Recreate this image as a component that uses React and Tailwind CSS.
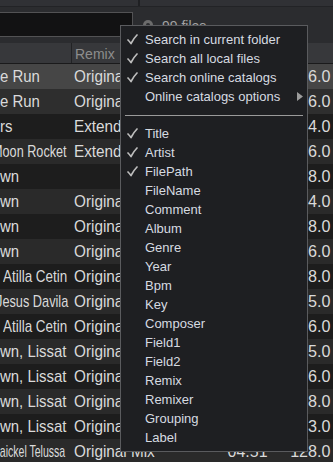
import React from "react";

const rows = [
  { bg: "bg-[#464646]", t: "e Run", c: "scale-x-[0.88] ml-0", r: "Original Mix", time: "05:12", bpm: "126.0" },
  { bg: "bg-[#2e2e2e]", t: "e Run", c: "scale-x-[0.88] ml-0", r: "Original Mix", time: "05:12", bpm: "126.0" },
  { bg: "bg-[#1d1d1d]", t: "rs", c: "scale-x-[0.88] ml-0", r: "Extended Mix", time: "06:03", bpm: "124.0" },
  { bg: "bg-[#2a2a2a]", t: "Moon Rocket", c: "scale-x-[0.745] ml-[-8px]", r: "Extended Mix", time: "06:41", bpm: "126.0" },
  { bg: "bg-[#1d1d1d]", t: "wn", c: "scale-x-[0.88] ml-0", r: "", time: "03:58", bpm: "128.0" },
  { bg: "bg-[#2a2a2a]", t: "wn", c: "scale-x-[0.88] ml-0", r: "Original Mix", time: "05:44", bpm: "124.0" },
  { bg: "bg-[#1d1d1d]", t: "wn", c: "scale-x-[0.88] ml-0", r: "Original Mix", time: "05:20", bpm: "128.0" },
  { bg: "bg-[#2a2a2a]", t: "wn", c: "scale-x-[0.88] ml-0", r: "Original Mix", time: "06:10", bpm: "126.0" },
  { bg: "bg-[#1d1d1d]", t: "Atilla Cetin", c: "scale-x-[0.79] ml-[3px]", r: "Original Mix", time: "05:36", bpm: "128.0" },
  { bg: "bg-[#2a2a2a]", t: "Jesus Davila", c: "scale-x-[0.75] ml-[-4px]", r: "Original Mix", time: "06:22", bpm: "125.0" },
  { bg: "bg-[#1d1d1d]", t: "Atilla Cetin", c: "scale-x-[0.79] ml-[3px]", r: "Original Mix", time: "05:48", bpm: "126.0" },
  { bg: "bg-[#2a2a2a]", t: "wn, Lissat", c: "scale-x-[0.88] ml-0", r: "Original Mix", time: "06:05", bpm: "125.0" },
  { bg: "bg-[#1d1d1d]", t: "wn, Lissat", c: "scale-x-[0.88] ml-0", r: "Original Mix", time: "06:05", bpm: "126.0" },
  { bg: "bg-[#2a2a2a]", t: "wn, Lissat", c: "scale-x-[0.88] ml-0", r: "Original Mix", time: "06:05", bpm: "128.0" },
  { bg: "bg-[#1d1d1d]", t: "wn, Lissat", c: "scale-x-[0.88] ml-0", r: "Original Mix", time: "06:05", bpm: "123.0" },
  { bg: "bg-[#2a2a2a]", t: "Maickel Telussa", c: "scale-x-[0.62] ml-[-9px]", r: "Original Mix", time: "04:51", bpm: "128.0" },
];

const searchItems = [
  { label: "Search in current folder", checked: true },
  { label: "Search all local files", checked: true },
  { label: "Search online catalogs", checked: true },
  { label: "Online catalogs options", checked: false, sub: true },
];

const fieldItems = [
  { label: "Title", checked: true },
  { label: "Artist", checked: true },
  { label: "FilePath", checked: true },
  { label: "FileName" },
  { label: "Comment" },
  { label: "Album" },
  { label: "Genre" },
  { label: "Year" },
  { label: "Bpm" },
  { label: "Key" },
  { label: "Composer" },
  { label: "Field1" },
  { label: "Field2" },
  { label: "Remix" },
  { label: "Remixer" },
  { label: "Grouping" },
  { label: "Label" },
];

function Check() {
  return (
    <svg width="11" height="11" viewBox="0 0 11 11" className="shrink-0">
      <path d="M1 6 Q2.5 7.5 4 9.5 Q6.5 4.5 10 1" fill="none" stroke="#bdbdbd" strokeWidth="1.7" strokeLinecap="round" strokeLinejoin="round" />
    </svg>
  );
}

function MenuItem({ item }) {
  return (
    <div className="h-[19px] flex items-center pl-[6px] pr-[3px]">
      <div className="w-[18px] flex items-center">{item.checked ? <Check /> : null}</div>
      <span className="flex-1 text-[13px] text-[#d6dbe1] whitespace-nowrap">{item.label}</span>
      {item.sub ? (
        <svg width="6" height="9" viewBox="0 0 6 9" className="mr-[1px]">
          <path d="M0 0 L6 4.5 L0 9 Z" fill="#9c9c9c" />
        </svg>
      ) : null}
    </div>
  );
}

export default function App() {
  return (
    <div className="relative w-[333px] h-[462px] overflow-hidden bg-[#1d1d1d] font-['Liberation_Sans',Arial,sans-serif]">
      {/* top strip */}
      <div className="h-[7px] flex bg-[#303135] border-b border-[#222326]">
        <div className="w-[140px] border-r-2 border-[#1f2023]" />
      </div>
      {/* search bar */}
      <div className="h-[36px] bg-[#2b2c2f] flex items-start pt-[5px]">
        <div className="w-[133px] h-[25px] bg-[#121213] border border-l-0 border-[#525254]" />
        <div className="ml-[10px] mt-[8px] w-[10px] h-[10px] rounded-full bg-[#6c6c6c] flex items-center justify-center">
          <div className="w-[4px] h-[4px] rounded-full bg-[#2b2c2f]" />
        </div>
        <span className="ml-[9px] mt-[7px] text-[14px] leading-none text-[#a3a3a3]">99 files</span>
      </div>
      {/* header */}
      <div className="h-[20px] w-[335px] flex bg-[#37383b] border-b border-[#1a1a1b] box-content">
        <div className="w-[72px] shrink-0 border-r border-[#222325]" />
        <div className="pl-[3px] pt-[2px] flex items-center text-[14px] text-[#8d8d8d]">Remix</div>
      </div>
      {/* rows */}
      <div className="flex flex-col">
        {rows.map((row, i) => (
          <div key={i} className={`h-[25px] w-[333px] flex items-center text-[17px] text-[#dadada] ${row.bg}`}>
            <div className="w-[72px] shrink-0 overflow-hidden whitespace-nowrap">
              <span className={`inline-block origin-left ${row.c}`}>{row.t}</span>
            </div>
            <div className="w-[140px] shrink-0 pl-[2px] overflow-hidden whitespace-nowrap">
              <span className="inline-block origin-left scale-x-[0.9]">{row.r}</span>
            </div>
            <div className="w-[56px] shrink-0 text-right whitespace-nowrap">
              <span className="inline-block origin-right scale-x-[0.94]">{row.time}</span>
            </div>
            <div className="w-[63px] shrink-0 text-right whitespace-nowrap">
              <span className="inline-block origin-right scale-x-[0.95]">{row.bpm}</span>
            </div>
          </div>
        ))}
      </div>
      {/* context menu */}
      <div className="absolute left-[120px] top-[25px] w-[188px] h-[427px] bg-[#1e1f22] border border-[#5a5b5e] pt-[4px]">
        {searchItems.map((it) => (
          <MenuItem key={it.label} item={it} />
        ))}
        <div className="h-[18px] flex items-center px-[4px]">
          <div className="h-px w-full bg-[#9a9a9a]" />
        </div>
        {fieldItems.map((it) => (
          <MenuItem key={it.label} item={it} />
        ))}
      </div>
    </div>
  );
}
